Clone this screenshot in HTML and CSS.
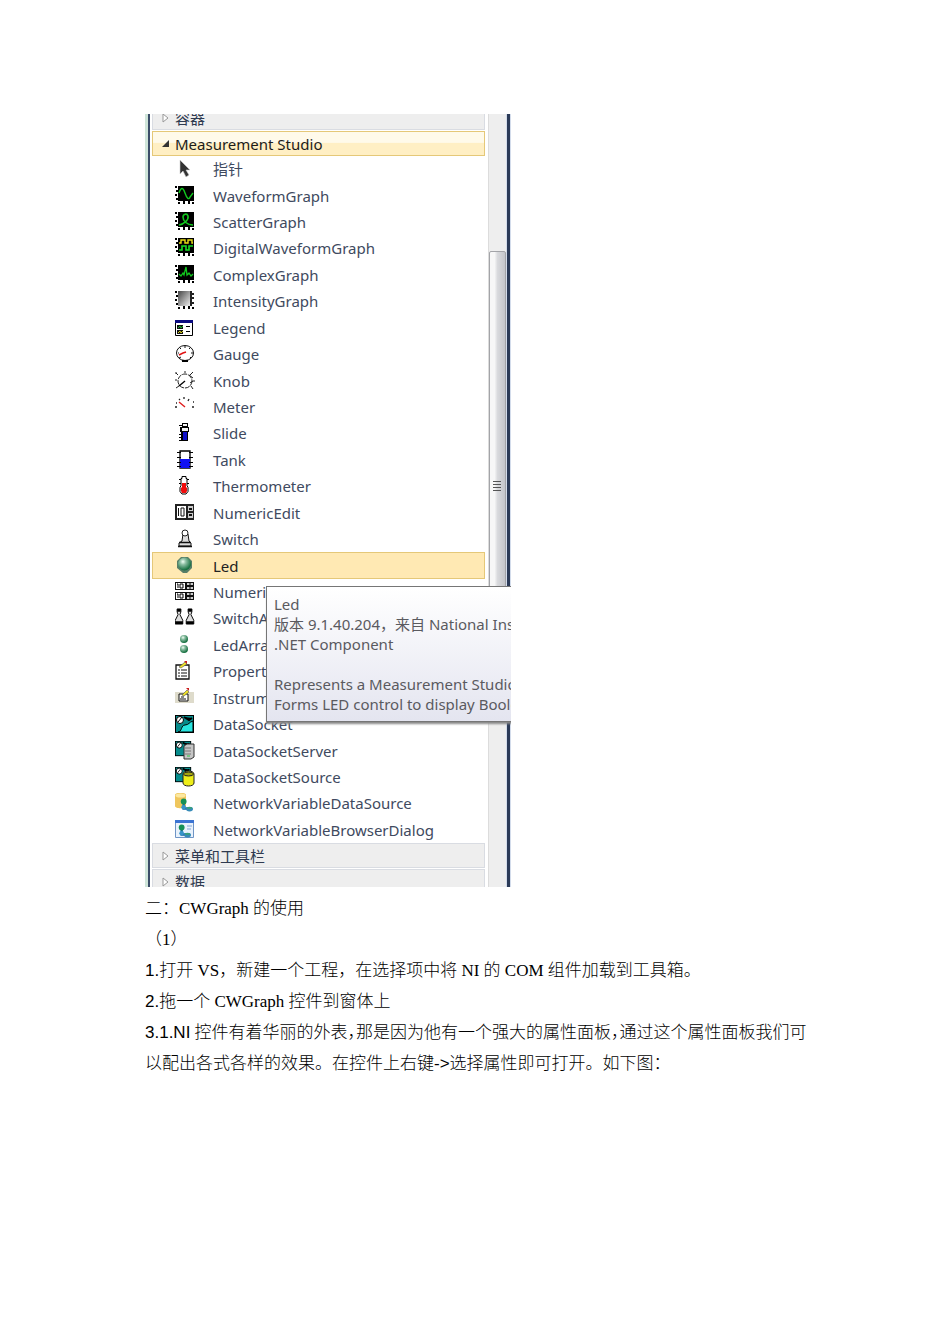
FILE: index.html
```html
<!DOCTYPE html>
<html lang="zh-CN">
<head>
<meta charset="utf-8">
<title>CWGraph 的使用</title>
<link rel="stylesheet" href="styles.css">
</head>
<body>
<svg class="defs" aria-hidden="true">
  <defs>
    <linearGradient id="grey" x1="0" y1="0" x2="1" y2="1"><stop offset="0" stop-color="#444"/><stop offset="1" stop-color="#eee"/></linearGradient>
    <radialGradient id="green" cx=".38" cy=".32" r=".65"><stop offset="0" stop-color="#f0fff4"/><stop offset=".35" stop-color="#8fc0a5"/><stop offset="1" stop-color="#167040"/></radialGradient>
    <symbol id="axes" viewBox="0 0 20 20"><path fill="#000" d="M3 0h16v15H3zM0 0h2v2H0zM1 4h2v2H1zM0 8h2v2H0zM1 12h2v2H1zM3 16h2v2H3zM8 15h2v3H8zM13 15h2v3h-2zM17 16h2v2h-2z"/></symbol>
    <symbol id="socket" viewBox="0 0 20 20"><path fill="#000" d="M0 1h19v18H0z"/><path fill="#078c8c" d="M1 2h17v16H1z"/><path d="M2 7l5-4M9 3l5 3 3-2" stroke="#000" stroke-width="2"/><circle cx="5" cy="6" r="3.500" fill="#fff" stroke="#000"/><path d="M3 8l4-5" stroke="#000"/></symbol>
    <symbol id="pawn" viewBox="0 0 10 18"><path d="M3 1h4v3l-1 3 3 6v4H1v-4l3-6-1-3z" fill="#ddd" stroke="#000"/><path d="M1 14h8v3H1zM3 1h4v3H3z" fill="#000"/></symbol>
    <symbol id="net" viewBox="0 0 12 12"><path d="M4 4v5h5" fill="none" stroke="#1762a0" stroke-width="2"/><circle cx="4" cy="3" r="2.500" fill="#159056"/><circle cx="4" cy="8" r="2" fill="#3794c8"/><ellipse cx="9" cy="9.500" rx="3" ry="2" fill="#368bb8"/><path d="M7 8.500h4" stroke="#3ba276" stroke-width="1.500"/></symbol>
    <symbol id="digit" viewBox="0 0 20 8"><path fill="#111" d="M0 0h19v8H0z"/><path fill="#fff" d="M1 1h9v6H1z"/><path fill="#ccc" d="M12 1h6v2h-6zM12 5h6v2h-6z"/><path d="M2 2h1v4M5 2h3v4H5z" fill="none" stroke="#000"/><path d="M14 2h2M14 6h2" stroke="#000"/></symbol>
  </defs>
</svg>
<main class="page">
  <section class="toolbox" aria-label="工具箱">
    <div class="edge edge-left"></div>
    <div class="panel">
      <button class="group" type="button"><svg class="arrow" viewBox="0 0 8 10"><path d="M1 1v8l5-4z" fill="#fff" stroke="#999"/></svg>容器</button>
      <button class="group group-open" type="button"><svg class="arrow" viewBox="0 0 8 10"><path d="M7 1v7H0z" fill="#333"/></svg>Measurement Studio</button>
      <ul class="items">
        <li><button class="item" type="button"><svg class="icon" viewBox="0 0 20 20"><path d="M5 1v14l3-3 3 6 3-2-3-5h4z" fill="#333" stroke="#ccc" stroke-width=".6"/></svg>指针</button></li>
        <li><button class="item" type="button"><svg class="icon" viewBox="0 0 20 20"><use href="#axes"/><path d="M4 7c2-6 4-6 6 0s4 7 5 4l3-4" fill="none" stroke="#12c91e" stroke-width="1.400"/></svg>WaveformGraph</button></li>
        <li><button class="item" type="button"><svg class="icon" viewBox="0 0 20 20"><use href="#axes"/><path d="M4 13c5-1 10-5 9-9-1-3-5-2-5 1 0 4 4 8 10 8" fill="none" stroke="#12c91e" stroke-width="1.600"/></svg>ScatterGraph</button></li>
        <li><button class="item" type="button"><svg class="icon" viewBox="0 0 20 20"><use href="#axes"/><path d="M4 5h2V2h4v3h3V2h4v3h1" fill="none" stroke="#e9df16" stroke-width="1.400"/><path d="M4 12h3V8h4v4h3V8h4" fill="none" stroke="#15dc24" stroke-width="1.600"/></svg>DigitalWaveformGraph</button></li>
        <li><button class="item" type="button"><svg class="icon" viewBox="0 0 20 20"><use href="#axes"/><path d="M4 9l2 2 2-3 1 2 2-8 1 8 2-2 2 3 2-2" fill="none" stroke="#12c91e" stroke-width="1.300"/></svg>ComplexGraph</button></li>
        <li><button class="item" type="button"><svg class="icon" viewBox="0 0 20 20"><use href="#axes"/><path d="M3 0h16v15H3z" fill="#fff"/><path d="M3 0h12v15H3z" fill="url(#grey)"/><path d="M15 0h2v15h-2zM17 2h2v2h-2zM17 6h2v2h-2zM17 11h2v2h-2z" fill="#222"/></svg>IntensityGraph</button></li>
        <li><button class="item" type="button"><svg class="icon" viewBox="0 0 20 20"><path d="M.5 2.500h17v15H.5z" fill="#fff" stroke="#000"/><path d="M0 2h18v3H0z" fill="#0b0b80"/><path d="M2 7h6v4H2zM2 12h6v4H2z" fill="#111"/><path d="M3 10l2-2 1 2 2-2" fill="none" stroke="#18bd2a"/><path d="M3 15l2-2 1 2 2-2" fill="none" stroke="#ddd51c"/><path d="M11 8.500h4M11 13.500h4" stroke="#000"/></svg>Legend</button></li>
        <li><button class="item" type="button"><svg class="icon" viewBox="0 0 20 20"><ellipse cx="10" cy="9" rx="8.500" ry="7.500" fill="#fff" stroke="#111"/><path d="M10 2v2M3 9h1M16 9h2M5 4l1 1M15 4l-1 1M4 14l2-1M15 13l1 1" stroke="#111"/><path d="M4 11l4-2 3-1" stroke="#e01212" stroke-width="1.400" fill="none"/><path d="M7 16h6v2H7z" fill="#000"/></svg>Gauge</button></li>
        <li><button class="item" type="button"><svg class="icon" viewBox="0 0 20 20"><circle cx="10" cy="10" r="7" fill="#fff" stroke="#222" stroke-dasharray="5 1"/><path d="M4 15l6-5" stroke="#000" stroke-width="1.300"/><path d="M0 2h2M1 2l2 2M9 1h2M18 1l-3 3M0 9h2M18 10h2M1 17l3-2M16 15l2 3M14 4l4 3M15 12l3-2" stroke="#222"/></svg>Knob</button></li>
        <li><button class="item" type="button"><svg class="icon" viewBox="0 0 20 20"><path d="M4 5l6 5" stroke="#df1c1c" stroke-width="1.400"/><path d="M0 10h2M1 6h1M4 2l1 1M9 0v2M14 2l-1 2M18 5h1M17 10h2" stroke="#222" stroke-width="1.300"/></svg>Meter</button></li>
        <li><button class="item" type="button"><svg class="icon" viewBox="0 0 20 20"><path d="M7 0h6v4h1v5h-1v9H6V9H5V4h2z" fill="#000"/><path d="M8 1h4v2H8zM7 5h6v3H7z" fill="#f3f3f3"/><path d="M8 9h4v8H8z" fill="#1010c8"/><path d="M4 2.500h3M4 11.500h3M4 14.500h3M4 17.500h3" stroke="#000"/></svg>Slide</button></li>
        <li><button class="item" type="button"><svg class="icon" viewBox="0 0 20 20"><path d="M5 1h10v17H5z" fill="#fff" stroke="#000" stroke-width="1.300"/><path d="M5 9h10v9H5z" fill="#1111f2"/><path d="M2 2.500h4M2 7.500h4M2 12.500h4M2 16.500h4M14 2.500h4M14 7.500h4M14 12.500h4M14 16.500h4" stroke="#000"/></svg>Tank</button></li>
        <li><button class="item" type="button"><svg class="icon" viewBox="0 0 20 20"><path d="M7 .5h4v2h1v7l1 2v4l-2 2.500H7l-2-2.500v-4l1-2v-7h1z" fill="#fff" stroke="#000"/><path d="M7 7h4v4l1 1v3l-1 2H7l-1-2v-3l1-1z" fill="#f00b0b"/><path d="M4 3.500h2M4 7.500h2M12 3.500h2M12 7.500h2" stroke="#000"/></svg>Thermometer</button></li>
        <li><button class="item" type="button"><svg class="icon" viewBox="0 0 20 20"><path d="M0 1h19v16H0z" fill="#222"/><path d="M2 3h9v12H2z" fill="#fff"/><path d="M13 3h5v5h-5zM13 10h5v5h-5z" fill="#ccc"/><path d="M3.500 5v8M6 5h3v8H6z" fill="none" stroke="#111"/><path d="M14 6h3M14 12h3" stroke="#111" stroke-width="2"/></svg>NumericEdit</button></li>
        <li><button class="item" type="button"><svg class="icon" viewBox="0 0 20 20"><path d="M8 5h5l1 7 2 2v3H4v-3l3-2z" fill="#ddd" stroke="#111"/><circle cx="10" cy="4" r="3" fill="#fff" stroke="#222"/><path d="M4 13.500h12M3 17.500h14" stroke="#111" stroke-width="1.500"/></svg>Switch</button></li>
        <li><button class="item item-selected" type="button" aria-describedby="tip"><svg class="icon" viewBox="0 0 20 20"><path d="M6 1h7l4 4v7l-5 5H8l-6-5V5z" fill="#587e68"/><circle cx="9.500" cy="8" r="6.500" fill="url(#green)"/></svg>Led</button></li>
        <li><button class="item" type="button"><svg class="icon" viewBox="0 0 20 20"><use href="#digit" y="0" width="20" height="8"/><use href="#digit" y="10" width="20" height="8"/></svg>NumericEditArray</button></li>
        <li><button class="item" type="button"><svg class="icon" viewBox="0 0 20 20"><use href="#pawn" x="-1" width="10" height="17"/><use href="#pawn" x="10" width="10" height="17"/></svg>SwitchArray</button></li>
        <li><button class="item" type="button"><svg class="icon" viewBox="0 0 20 20"><circle cx="9" cy="4" r="4" fill="url(#green)"/><circle cx="9" cy="14" r="4" fill="url(#green)"/></svg>LedArray</button></li>
        <li><button class="item" type="button"><svg class="icon" viewBox="0 0 20 20"><path d="M1 4h13v14H1z" fill="#fff" stroke="#111" stroke-width="1.300"/><path d="M3 9h2M6 9h6M3 12h2M6 12h6M3 15h2M6 15h6" stroke="#111"/><path d="M4 6l6-5 2 2-6 4z" fill="#eee126" stroke="#555" stroke-width=".6"/><path d="M9 0h3v3z" fill="#c91e1e"/></svg>PropertyEditor</button></li>
        <li><button class="item" type="button"><svg class="icon" viewBox="0 0 20 20"><path d="M0 4h19v11H0z" fill="#dedbcb"/><path d="M4 6h9v7H4z" fill="#fff" stroke="#111"/><path d="M5 11h6M6 9h3" stroke="#111"/><path d="M7 7l5-5 2 2-5 4z" fill="#eee126" stroke="#555" stroke-width=".6"/><path d="M11 0h3v3z" fill="#c91e1e"/></svg>InstrumentControlStrip</button></li>
        <li><button class="item" type="button"><svg class="icon" viewBox="0 0 20 20"><use href="#socket"/><path d="M3 18c4 0 3-7 7-7s4-3 8-4v11z" fill="#28e4df" stroke="#000"/></svg>DataSocket</button></li>
        <li><button class="item" type="button"><svg class="icon" viewBox="0 0 20 20"><use href="#socket" y="-1" width="17" height="17"/><path d="M9 5l3-2h7v13l-3 2H9z" fill="#c5c5c5" stroke="#333"/><path d="M10 7h6M10 10h6M10 13h6" stroke="#777"/><path d="M12 15h3" stroke="#28c740"/></svg>DataSocketServer</button></li>
        <li><button class="item" type="button"><svg class="icon" viewBox="0 0 20 20"><use href="#socket" y="-1" width="17" height="17"/><path d="M8 7c0-4 11-4 11 0v9c0 4-11 4-11 0z" fill="#eeee19" stroke="#222"/><ellipse cx="13.500" cy="7" rx="5" ry="2" fill="#a6a60f" stroke="#222"/></svg>DataSocketSource</button></li>
        <li><button class="item" type="button"><svg class="icon" viewBox="0 0 20 20"><path d="M0 2c0-3 11-3 11 0v11c0 3-11 3-11 0z" fill="#efc65d"/><ellipse cx="5.500" cy="2.500" rx="5" ry="2" fill="#fce8a0"/><use href="#net" x="4" y="5" width="14" height="14"/></svg>NetworkVariableDataSource</button></li>
        <li><button class="item" type="button"><svg class="icon" viewBox="0 0 20 20"><path d="M.5 .5h18v17H.5z" fill="#e9f2fc" stroke="#6f95c6"/><path d="M0 0h19v3H0z" fill="#3b74d3"/><path d="M12 6h5M12 9h4" stroke="#83a6d8"/><use href="#net" x="2" y="4" width="14" height="14"/></svg>NetworkVariableBrowserDialog</button></li>
      </ul>
      <button class="group" type="button"><svg class="arrow" viewBox="0 0 8 10"><path d="M1 1v8l5-4z" fill="#fff" stroke="#999"/></svg>菜单和工具栏</button>
      <button class="group" type="button"><svg class="arrow" viewBox="0 0 8 10"><path d="M1 1v8l5-4z" fill="#fff" stroke="#999"/></svg>数据</button>
    </div>
    <div class="scrollbar"><div class="thumb"><svg class="grip" viewBox="0 0 8 12"><path d="M0 1.500h8M0 4.500h8M0 7.500h8M0 10.500h8" stroke="#555"/></svg></div></div>
    <div class="edge edge-right"></div>
    <div class="tip" id="tip" role="tooltip">
      <p>Led</p>
      <p>版本 9.1.40.204，来自 National Instruments</p>
      <p>.NET Component</p>
      <p class="tip-text">Represents a Measurement Studio Windows</p>
      <p>Forms LED control to display Boolean values.</p>
    </div>
  </section>
  <article class="notes">
    <p>二：CWGraph 的使用</p>
    <p>（1）</p>
    <p><span class="num">1.</span>打开 VS，新建一个工程，在选择项中将 NI 的 COM 组件加载到工具箱。</p>
    <p><span class="num">2.</span>拖一个 CWGraph 控件到窗体上</p>
    <p><span class="num">3.1.NI</span> 控件有着华丽的外表<span class="half">，</span>那是因为他有一个强大的属性面板<span class="half">，</span>通过这个属性面板我们可以配出各式各样的效果。在控件上右键<span class="num">-&gt;</span>选择属性即可打开。如下图：</p>
  </article>
</main>
</body>
</html>
```
FILE: styles.css
```css
* { box-sizing: border-box; }
body { margin: 0; background: #fff; }
p, ul { margin: 0; padding: 0; }
.defs { position: absolute; width: 0; height: 0; }

.page { padding: 114px 136px 120px 145px; }

/* Toolbox: a clipped pane with its own scrollbar */
.toolbox {
  position: relative;
  display: flex;
  max-width: 366px;
  height: 773px;
  overflow: hidden;
  background: #fff;
  font-family: "Noto Sans", "Noto Sans CJK SC", sans-serif;
  font-size: 15px;
  line-height: 20px;
}
.edge { flex: none; }
.edge-left {
  width: 5px;
  border-left: 3px solid #cfe5d9;
  background: #3c4d69;
}
.edge-right {
  width: 5px;
  border: solid #d3dceb;
  border-width: 0 1px;
  background: #2b3a57;
}
.panel {
  flex: 1;
  min-width: 0;
  display: flex;
  flex-direction: column;
  margin: -9px 3px -7px 2px;
}

.group, .item {
  display: flex;
  align-items: center;
  width: 100%;
  margin: 0;
  border: 1px solid transparent;
  background: none;
  font: inherit;
  text-align: left;
  white-space: nowrap;
}
.group {
  flex: none;
  height: 25px;
  padding: 0 0 0 9px;
  gap: 5px;
  border: 1px solid #d9dce2;
  background: #eee;
  color: #2f3a50;
}
.group + .group { margin-top: 1px; }
.group-open {
  border: 1px solid #e5c878;
  background: linear-gradient(#fffaea 45%, #ffefc4 50%);
  color: #1c1c1c;
}
.arrow { flex: none; width: 8px; height: 10px; }

.items {
  flex: 1;
  display: grid;
  grid-auto-rows: 1fr;
  list-style: none;
}
.items li { display: flex; min-height: 0; }
.item {
  padding: 0 0 0 22px;
  gap: 18px;
  color: #404a60;
}
.item-selected {
  border-color: #e5c878;
  background: #ffe9b3;
  color: #222;
}
.icon { flex: none; width: 20px; height: 20px; }

.scrollbar {
  flex: none;
  width: 18px;
  padding: 137px 0 0;
  border-left: 1px solid #dcdcdc;
  background: #eee;
}
.thumb {
  display: flex;
  align-items: center;
  justify-content: center;
  height: 470px;
  padding-right: 1px;
  border: 1px solid #a3a4a8;
  border-radius: 2px;
  background: linear-gradient(90deg, #f7f7f7 30%, #d9dadd 50%, #c4c5ca);
}
.grip { width: 8px; height: 12px; }

.tip {
  position: absolute;
  left: 121px;
  top: 472px;
  width: 300px;
  padding: 7px 7px 7px;
  border: 1px solid #767676;
  background: linear-gradient(#fff, #e4e5f0);
  box-shadow: 1px 2px 2px #888;
  color: #5a5a5f;
  white-space: nowrap;
}
.tip-text { margin-top: 20px; }

/* Document text */
.notes {
  padding-top: 6px;
  font-family: "Liberation Serif", "Noto Sans CJK SC", serif;
  font-size: 17px;
  font-weight: 300;
  line-height: 31px;
  color: #000;
}
.num { font-family: "Liberation Sans", "Noto Sans CJK SC", sans-serif; }
.half { font-feature-settings: "halt"; }
```
